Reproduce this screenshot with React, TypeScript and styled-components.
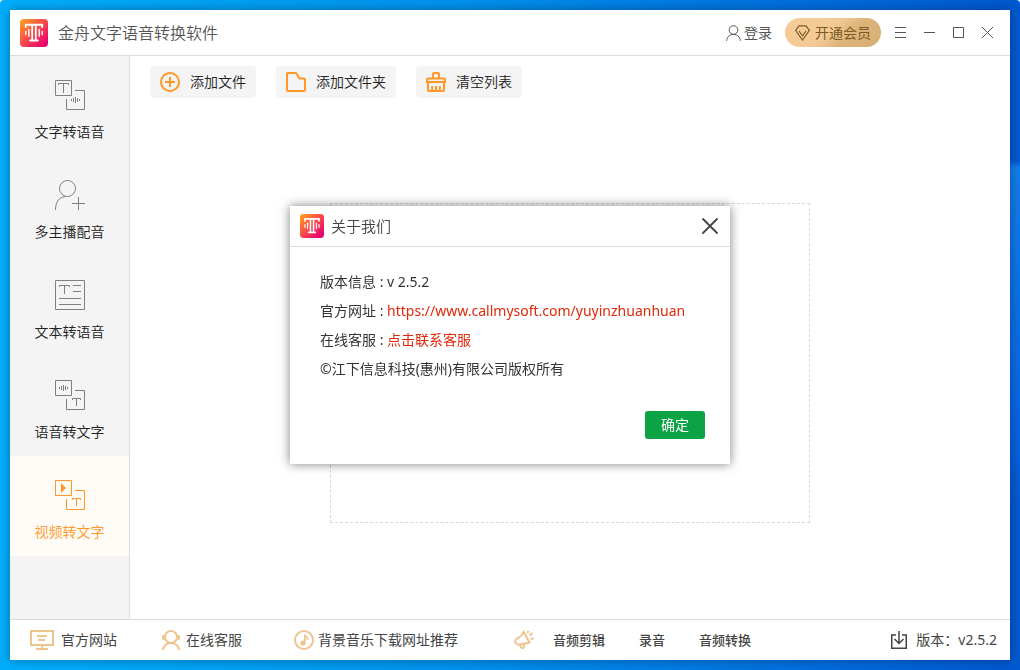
import React from "react";
import styled, { createGlobalStyle, css } from "styled-components";

const GlobalStyle = createGlobalStyle`
  * { box-sizing: border-box; }
  body {
    margin: 0;
    background: #fff;
    font-family: "Noto Sans", "Noto Sans CJK SC", sans-serif;
    font-size: 14px;
    line-height: 20px;
    color: #333;
  }
  button { font: inherit; color: inherit; border: 0; padding: 0; background: none; cursor: pointer; }
  a { color: inherit; text-decoration: none; }
  svg { display: block; flex: none; }
`;

const Desktop = styled.div`
  display: flex;
  min-height: 100vh;
  padding: 10px;
  border-radius: 4px 4px 0 0;
  background:
    linear-gradient(180deg, transparent 24%, rgba(30, 150, 250, 0.6) 25%, rgba(10, 110, 235, 0.6) 62%, transparent 75%) right / 10px 100% no-repeat,
    linear-gradient(90deg, #00aefc 0%, #0092ee 45%, #0068dc 85%, #0058d0 100%);
`;

const Window = styled.div`
  flex: 1;
  min-width: 0;
  display: flex;
  flex-direction: column;
  background: #fff;
  box-shadow: 0 0 10px rgba(0, 0, 0, 0.35);
`;

const TitleBar = styled.header`
  display: flex;
  align-items: center;
  height: 46px;
  padding: 0 8px 0 10px;
  border-bottom: 1px solid #dcdcdc;
  color: #555;
`;

const AppTitle = styled.h1`
  flex: 1;
  margin: 0 0 0 10px;
  font-size: 16px;
  line-height: 24px;
  font-weight: 350;
`;

const LoginButton = styled.button`
  display: flex;
  align-items: center;
  gap: 3px;
  margin-right: 13px;
`;

const VipButton = styled.button`
  display: flex;
  align-items: center;
  gap: 5px;
  height: 29px;
  margin-right: 5px;
  padding: 0 10px;
  border-radius: 15px;
  color: #7c5a26;
  background: linear-gradient(135deg, #f6cc98 0%, #f3ca96 45%, #dcb47a 65%, #d8ae72 100%);
`;

const WindowButton = styled.button`
  display: grid;
  place-items: center;
  width: 29px;
  height: 29px;
`;

const Middle = styled.div`
  flex: 1;
  display: flex;
`;

const Sidebar = styled.nav`
  width: 120px;
  background: #f4f4f4;
  border-right: 1px solid #dcdcdc;
`;

const NavItem = styled.button<{ $active?: boolean }>`
  display: flex;
  flex-direction: column;
  align-items: center;
  gap: 12px;
  width: 100%;
  height: 100px;
  padding-top: 24px;
  font-weight: 350;
  color: #222;
  svg { color: #808080; }
  ${(p) =>
    p.$active &&
    css`
      background: #fffbf6;
      color: #ff9625;
      svg { color: #ff9625; }
    `}
`;

const Content = styled.main`
  flex: 1;
  display: flex;
  flex-direction: column;
`;

const Toolbar = styled.div`
  display: flex;
  gap: 20px;
  padding: 10px 20px 9px;
`;

const ToolButton = styled.button`
  display: flex;
  align-items: center;
  gap: 10px;
  height: 32px;
  padding: 0 10px;
  border-radius: 4px;
  font-weight: 350;
  background: #f4f4f4;
  color: #222;
  svg { color: #ff9625; }
`;

const DropArea = styled.div`
  flex: 1;
  display: grid;
  place-items: center;
`;

const DropZone = styled.div`
  width: 480px;
  height: 320px;
  border: 1px dashed #d8d8d8;
`;

const Footer = styled.footer`
  display: flex;
  align-items: center;
  height: 41px;
  padding: 0 13px 0 20px;
  border-top: 1px solid #dcdcdc;
  color: #444;
`;

const FooterLink = styled.a<{ $gap: number; $space?: number }>`
  display: flex;
  align-items: center;
  gap: ${(p) => p.$gap}px;
  margin-right: ${(p) => p.$space ?? 0}px;
  svg { color: #ecc48c; }
`;

const Promo = styled.div`
  flex: 1;
  display: flex;
  align-items: center;
  svg { color: #ecc48c; margin-right: 19px; }
`;

const PromoLink = styled.a`
  margin-right: 34px;
  font-size: 13px;
  font-weight: 500;
`;

const Version = styled.button`
  display: flex;
  align-items: center;
  gap: 9px;
`;

const Overlay = styled.div`
  position: fixed;
  inset: 0;
  display: grid;
  place-items: center;
`;

const Dialog = styled.section`
  width: 440px;
  background: #fff;
  box-shadow: 0 0 10px rgba(0, 0, 0, 0.5);
`;

const DialogHeader = styled.header`
  display: flex;
  align-items: center;
  gap: 7px;
  height: 41px;
  padding: 0 12px 0 10px;
  border-bottom: 1px solid #dcdcdc;
  color: #444;
`;

const DialogTitle = styled.h2`
  flex: 1;
  margin: 0;
  font-size: 15px;
  line-height: 20px;
  font-weight: 350;
`;

const DialogBody = styled.div`
  padding: 20px 30px 0;
  line-height: 29px;
`;

const Line = styled.p`
  margin: 0;
  a { color: #e0280a; }
`;

const DialogActions = styled.div`
  display: flex;
  justify-content: flex-end;
  padding: 28px 25px 25px;
`;

const OkButton = styled.button`
  width: 60px;
  height: 28px;
  border-radius: 3px;
  background: #0ba345;
  color: #fff;
`;

function Svg({ w, h, sw = 1, children }: { w: number; h: number; sw?: number; children: React.ReactNode }) {
  return (
    <svg width={w} height={h} viewBox={`0 0 ${w} ${h}`} fill="none" stroke="currentColor" strokeWidth={sw} aria-hidden="true">
      {children}
    </svg>
  );
}

function Logo({ size, id }: { size: number; id: string }) {
  return (
    <svg width={size} height={size} viewBox="0 0 28 28" fill="none" aria-hidden="true">
      <defs>
        <linearGradient id={id} x1="0" y1="0" x2="1" y2="1">
          <stop offset="0.05" stopColor="#ff9a1f" />
          <stop offset="0.5" stopColor="#f9484c" />
          <stop offset="0.9" stopColor="#e6006f" />
        </linearGradient>
      </defs>
      <rect width="28" height="28" rx="4" fill={`url(#${id})`} />
      <g stroke="#fff" strokeLinecap="round" strokeLinejoin="round">
        <path d="M5.800 8V5.800H22.200V8" strokeWidth="2" />
        <path d="M12.200 6V21M15.800 6V21" strokeWidth="1.800" />
        <path d="M10.200 21.500H17.800" strokeWidth="2" />
        <path d="M5.800 12.500V15.500M8.800 10.500V17.200M19.200 10.500V17.200M22.200 12.500V15.500" strokeWidth="1.400" />
      </g>
    </svg>
  );
}

const Frames = () => (
  <path d="M.5.5H16.5V15.5H.5ZM20 10.5H29.5V29.5H11.5V19" />
);
const SmallT = () => <path d="M17.5 20V18.5H25.5V20M21.5 18.5V26" />;

const TextToVoice = () => (
  <Svg w={30} h={30}>
    <Frames />
    <path d="M3.5 5V3.5H13.5V5M8.5 3.5V13M16.5 19V21M18.5 18V22M20.5 17V23M22.5 18V22M24.5 19V21" />
  </Svg>
);
const MultiVoice = () => (
  <Svg w={30} h={30}>
    <circle cx="12.5" cy="8.5" r="8" />
    <path d="M.5 30C.5 22 4 17.5 10 16.5M17 23.5H30M23.5 17V30" />
  </Svg>
);
const Document = () => (
  <Svg w={30} h={30}>
    <path d="M.5.5H29.5V29.5H.5ZM4.5 7V5.5H14.5V7M9.5 5.5V14M18 5.5H26M18 11.5H26M4 18.5H26M4 24.5H26" />
  </Svg>
);
const VoiceToText = () => (
  <Svg w={30} h={30}>
    <Frames />
    <SmallT />
    <path d="M4.5 7V9M6.5 6V10M8.5 5V11M10.5 6V10M12.5 7V9" />
  </Svg>
);
const VideoToText = () => (
  <Svg w={30} h={30}>
    <Frames />
    <SmallT />
    <path d="M6 3L11 8L6 13Z" fill="currentColor" stroke="none" />
  </Svg>
);

const AddCircle = () => (
  <Svg w={20} h={20} sw={2}>
    <circle cx="10" cy="10" r="9" />
    <path d="M5 10H15M10 5V15" />
  </Svg>
);
const Folder = () => (
  <Svg w={20} h={20} sw={2}>
    <path d="M2 1H10L13.5 6.5H18Q19 6.5 19 7.5V18Q19 19 18 19H2Q1 19 1 18V2Q1 1 2 1Z" strokeLinejoin="round" />
  </Svg>
);
const Broom = () => (
  <Svg w={20} h={20} sw={2}>
    <path d="M7 6V2Q7 1 8 1H12Q13 1 13 2V6M1 10V7.5Q1 6.5 2 6.5H18Q19 6.5 19 7.5V10ZM2 10V18Q2 19 3 19H17Q18 19 18 18V10M6.2 14V18.5M10 14V18.5M13.8 14V18.5" />
  </Svg>
);

const navItems = [
  { label: "文字转语音", Icon: TextToVoice },
  { label: "多主播配音", Icon: MultiVoice },
  { label: "文本转语音", Icon: Document },
  { label: "语音转文字", Icon: VoiceToText },
  { label: "视频转文字", Icon: VideoToText, active: true },
];

const tools = [
  { label: "添加文件", Icon: AddCircle },
  { label: "添加文件夹", Icon: Folder },
  { label: "清空列表", Icon: Broom },
];

export default function App() {
  return (
    <>
      <GlobalStyle />
      <Desktop>
        <Window>
          <TitleBar>
            <Logo size={28} id="logo-main" />
            <AppTitle>金舟文字语音转换软件</AppTitle>
            <LoginButton>
              <Svg w={15} h={16}>
                <circle cx="7.5" cy="5" r="4.3" />
                <path d="M.6 15.8C1 12 3.6 9.4 7.5 9.4S14 12 14.4 15.8" />
              </Svg>
              登录
            </LoginButton>
            <VipButton>
              <Svg w={15} h={16}>
                <path d="M4 .8H11L14.4 5.4L7.5 15L.6 5.4ZM4 6L7.5 10.8L11 6" strokeWidth="1.2" />
              </Svg>
              开通会员
            </VipButton>
            <WindowButton aria-label="菜单">
              <Svg w={11} h={11}><path d="M0 .5H11M0 5.5H11M0 10.5H11" /></Svg>
            </WindowButton>
            <WindowButton aria-label="最小化">
              <Svg w={11} h={11}><path d="M0 5.5H11" /></Svg>
            </WindowButton>
            <WindowButton aria-label="最大化">
              <Svg w={11} h={11}><path d="M.5.5H10.5V10.5H.5Z" /></Svg>
            </WindowButton>
            <WindowButton aria-label="关闭">
              <Svg w={11} h={11}><path d="M0 0L11 11M11 0L0 11" /></Svg>
            </WindowButton>
          </TitleBar>

          <Middle>
            <Sidebar>
              {navItems.map(({ label, Icon, active }) => (
                <NavItem key={label} $active={active}>
                  <Icon />
                  {label}
                </NavItem>
              ))}
            </Sidebar>
            <Content>
              <Toolbar>
                {tools.map(({ label, Icon }) => (
                  <ToolButton key={label}>
                    <Icon />
                    {label}
                  </ToolButton>
                ))}
              </Toolbar>
              <DropArea>
                <DropZone />
              </DropArea>
            </Content>
          </Middle>

          <Footer>
            <FooterLink href="#site" $gap={7} $space={45}>
              <Svg w={24} h={20} sw={2}>
                <path d="M1 1H23V15H1ZM12 15V19M6 19H18M7 6H17M8 10H15" />
              </Svg>
              官方网站
            </FooterLink>
            <FooterLink href="#service" $gap={6} $space={52}>
              <Svg w={18} h={20} sw={2}>
                <circle cx="9" cy="7" r="6" />
                <path d="M1.2 5V10M16.8 5V10M1 20C1.5 15.5 5 13 9 13S16.500 15.500 17 20" />
              </Svg>
              在线客服
            </FooterLink>
            <FooterLink href="#music" $gap={4} $space={56}>
              <Svg w={20} h={20} sw={2}>
                <circle cx="10" cy="10" r="9" />
                <circle cx="9" cy="13" r="2.600" fill="currentColor" stroke="none" />
                <path d="M10.800 13V4.500C11 7 14 6.500 13.500 10" strokeWidth="1.600" />
              </Svg>
              背景音乐下载网址推荐
            </FooterLink>
            <Promo>
              <Svg w={20} h={20} sw={2}>
                <path d="M9.500 1.500L15.500 12.500L6 14.500Q3 15.500 1.500 12.800Q.3 10 3 8.500Q8 6.500 9.500 1.500ZM6 14.500L7 17.500Q8 19 9.500 17.800Q10.500 16.800 9.500 14M13.500 3L14.500 .8M15.500 5.500L18.500 3M16.500 8.500L19.500 9" strokeWidth="1.900" strokeLinejoin="round" />
              </Svg>
              <PromoLink href="#cut">音频剪辑</PromoLink>
              <PromoLink href="#record">录音</PromoLink>
              <PromoLink href="#convert">音频转换</PromoLink>
            </Promo>
            <Version>
              <Svg w={16} h={18}>
                <path d="M5 4H.75V17.250H15.250V4H11M8 0V12.500M3.500 8L8 12.500L12.500 8" strokeWidth="1.500" />
              </Svg>
              版本：v2.5.2
            </Version>
          </Footer>
        </Window>
      </Desktop>

      <Overlay>
        <Dialog role="dialog" aria-labelledby="about-title">
          <DialogHeader>
            <Logo size={24} id="logo-about" />
            <DialogTitle id="about-title">关于我们</DialogTitle>
            <button aria-label="关闭">
              <Svg w={16} h={16}><path d="M1 1L15 15M15 1L1 15" strokeWidth="1.800" strokeLinecap="round" /></Svg>
            </button>
          </DialogHeader>
          <DialogBody>
            <Line>版本信息 : v 2.5.2</Line>
            <Line>官方网址 : <a href="#site">https://www.callmysoft.com/yuyinzhuanhuan</a></Line>
            <Line>在线客服 : <a href="#service">点击联系客服</a></Line>
            <Line>©江下信息科技(惠州)有限公司版权所有</Line>
          </DialogBody>
          <DialogActions>
            <OkButton>确定</OkButton>
          </DialogActions>
        </Dialog>
      </Overlay>
    </>
  );
}
